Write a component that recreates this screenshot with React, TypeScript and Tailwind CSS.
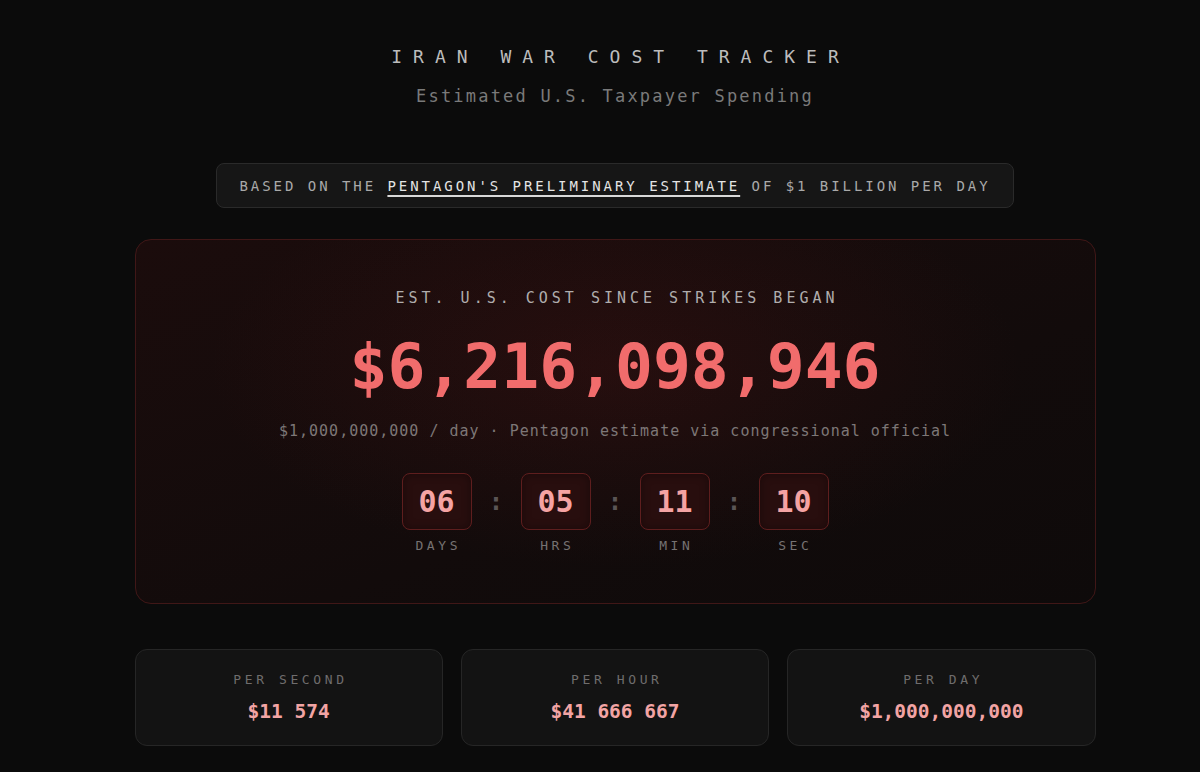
import React from "react";

const mono = "font-['DejaVu_Sans_Mono','Liberation_Mono',monospace]";

const units = [
  { value: "06", label: "DAYS" },
  { value: "05", label: "HRS" },
  { value: "11", label: "MIN" },
  { value: "10", label: "SEC" },
];

const rates = [
  { label: "PER SECOND", value: "$11 574" },
  { label: "PER HOUR", value: "$41 666 667" },
  { label: "PER DAY", value: "$1,000,000,000" },
];

const TimeBox = ({ value, label }: { value: string; label: string }) => {
  return (
    <div className="flex flex-col items-center">
      <div className="w-[70px] h-[57px] rounded-lg border border-[#5e1e1e] bg-[#280e0e] flex items-center justify-center shadow-[inset_0_0_10px_rgba(0,0,0,0.35)]">
        <span className="text-[30px] leading-none font-bold text-[#f5a3a3]">{value}</span>
      </div>
      <div className="mt-[8px] text-[13px] leading-[16px] tracking-[3.6px] pl-[3.6px] text-[#767272]">
        {label}
      </div>
    </div>
  );
};

const App = () => {
  return (
    <div className={`min-h-[772px] bg-[#0b0b0b] pl-[30px] ${mono}`}>
      <div className="w-[961px] mx-auto flex flex-col items-center pt-[43px]">
        <h1 className="text-[18px] leading-[28px] tracking-[11px] pl-[11px] text-[#bcbcbc] font-normal">
          IRAN WAR COST TRACKER
        </h1>
        <p className="mt-[13px] text-[17px] leading-[24px] tracking-[2.2px] text-[#7a7a7a]">
          Estimated U.S. Taxpayer Spending
        </p>

        <div className="mt-[55px] h-[45px] w-[798px] flex items-center justify-center rounded-lg border border-[#2a2a2a] bg-[#161616]">
          <span className="text-[14px] leading-[20px] tracking-[2.95px] text-[#a9a9a9]">
            BASED ON THE{" "}
            <span className="text-[#e4e4e4] underline decoration-2 underline-offset-[4px] decoration-[#d8d8d8]">
              PENTAGON'S PRELIMINARY ESTIMATE
            </span>{" "}
            OF $1 BILLION PER DAY
          </span>
        </div>

        <div className="mt-[31px] w-full rounded-2xl border border-[#401717] bg-[radial-gradient(ellipse_at_50%_35%,rgba(120,28,28,0.18),transparent_60%),linear-gradient(160deg,#1b0c0c,#120b0b_60%,#0e0a0a)] flex flex-col items-center pt-[48px] pb-[49px]">
          <div className="text-[15px] leading-[20px] tracking-[4px] pl-[4px] text-[#b0adad]">
            EST. U.S. COST SINCE STRIKES BEGAN
          </div>
          <div className="mt-[23px] text-[63px] leading-[72px] font-bold text-[#f16c6c]">
            $6,216,098,946
          </div>
          <div className="mt-[18px] text-[15px] leading-[20px] tracking-[1px] text-[#7d7777]">
            $1,000,000,000 / day · Pentagon estimate via congressional official
          </div>
          <div className="mt-[32px] flex items-start">
            {units.map((u, i) => (
              <React.Fragment key={u.label}>
                {i > 0 && (
                  <div className="w-[49px] h-[57px] flex items-center justify-center text-[24px] text-[#5a5555] font-bold">
                    :
                  </div>
                )}
                <TimeBox value={u.value} label={u.label} />
              </React.Fragment>
            ))}
          </div>
        </div>

        <div className="mt-[45px] w-full grid grid-cols-3 gap-[18px]">
          {rates.map((r) => (
            <div
              key={r.label}
              className="h-[97px] rounded-xl border border-[#262626] bg-[#131313] flex flex-col items-center justify-center"
            >
              <div className="text-[13px] leading-[18px] tracking-[3.6px] pl-[3.6px] text-[#6f6d6d]">
                {r.label}
              </div>
              <div className="mt-[10px] text-[19.5px] leading-[26px] font-bold text-[#f2a4a4]">
                {r.value}
              </div>
            </div>
          ))}
        </div>
      </div>
    </div>
  );
};

export default App;
